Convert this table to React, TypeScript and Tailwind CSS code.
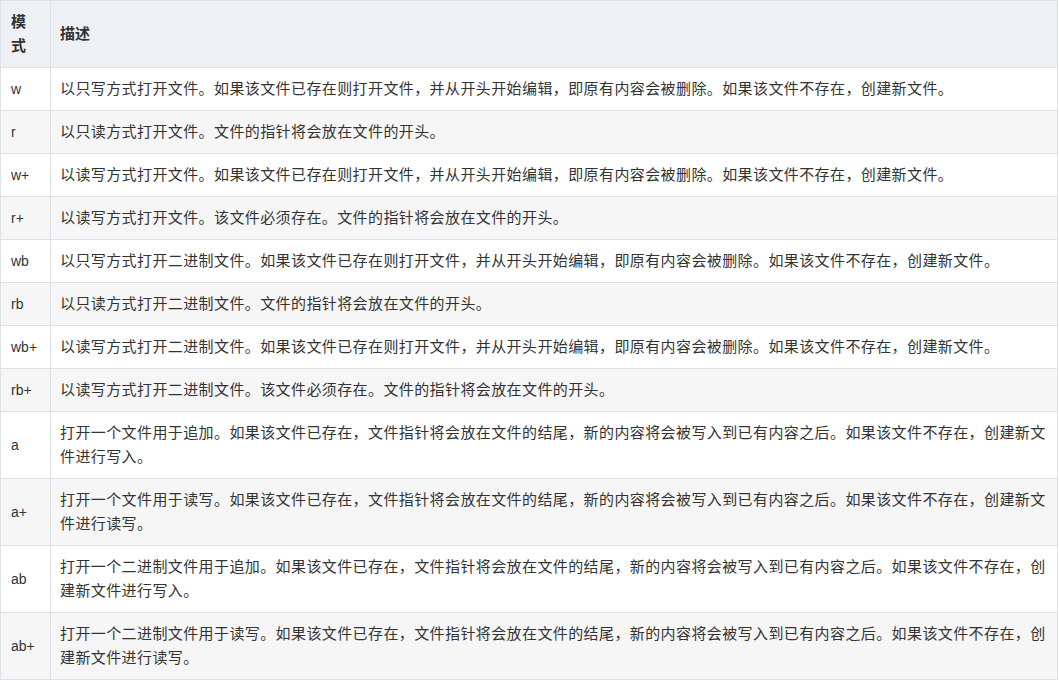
import React from "react";

const rows: [string, string][] = [
  ["w", "以只写方式打开文件。如果该文件已存在则打开文件，并从开头开始编辑，即原有内容会被删除。如果该文件不存在，创建新文件。"],
  ["r", "以只读方式打开文件。文件的指针将会放在文件的开头。"],
  ["w+", "以读写方式打开文件。如果该文件已存在则打开文件，并从开头开始编辑，即原有内容会被删除。如果该文件不存在，创建新文件。"],
  ["r+", "以读写方式打开文件。该文件必须存在。文件的指针将会放在文件的开头。"],
  ["wb", "以只写方式打开二进制文件。如果该文件已存在则打开文件，并从开头开始编辑，即原有内容会被删除。如果该文件不存在，创建新文件。"],
  ["rb", "以只读方式打开二进制文件。文件的指针将会放在文件的开头。"],
  ["wb+", "以读写方式打开二进制文件。如果该文件已存在则打开文件，并从开头开始编辑，即原有内容会被删除。如果该文件不存在，创建新文件。"],
  ["rb+", "以读写方式打开二进制文件。该文件必须存在。文件的指针将会放在文件的开头。"],
  ["a", "打开一个文件用于追加。如果该文件已存在，文件指针将会放在文件的结尾，新的内容将会被写入到已有内容之后。如果该文件不存在，创建新文件进行写入。"],
  ["a+", "打开一个文件用于读写。如果该文件已存在，文件指针将会放在文件的结尾，新的内容将会被写入到已有内容之后。如果该文件不存在，创建新文件进行读写。"],
  ["ab", "打开一个二进制文件用于追加。如果该文件已存在，文件指针将会放在文件的结尾，新的内容将会被写入到已有内容之后。如果该文件不存在，创建新文件进行写入。"],
  ["ab+", "打开一个二进制文件用于读写。如果该文件已存在，文件指针将会放在文件的结尾，新的内容将会被写入到已有内容之后。如果该文件不存在，创建新文件进行读写。"],
];

export default function App() {
  return (
    <div
      className="bg-white text-[#333] text-[14px] leading-[24px]"
      style={{ fontFamily: '"Liberation Sans", "Noto Sans CJK SC", sans-serif' }}
    >
      <table className="w-[1058px] table-fixed border-collapse border border-[#dfe2e5]">
        <colgroup>
          <col className="w-[50px]" />
          <col />
        </colgroup>
        <thead>
          <tr className="bg-[#eef1f4]">
            <th className="border border-[#dfe2e5] px-[10px] py-[9px] text-left font-bold text-[15px]">
              模<br />式
            </th>
            <th className="border border-[#dfe2e5] px-[9px] py-[9px] text-left font-bold text-[15px]">描述</th>
          </tr>
        </thead>
        <tbody>
          {rows.map(([mode, desc], i) => (
            <tr key={mode} className={i % 2 === 1 ? "bg-[#f6f6f6]" : "bg-white"}>
              <td className="border border-[#dfe2e5] px-[10px] py-[9px] align-middle">{mode}</td>
              <td className="border border-[#dfe2e5] px-[9px] py-[9px] text-[15px] tracking-[0.4px]">{desc}</td>
            </tr>
          ))}
        </tbody>
      </table>
    </div>
  );
}
